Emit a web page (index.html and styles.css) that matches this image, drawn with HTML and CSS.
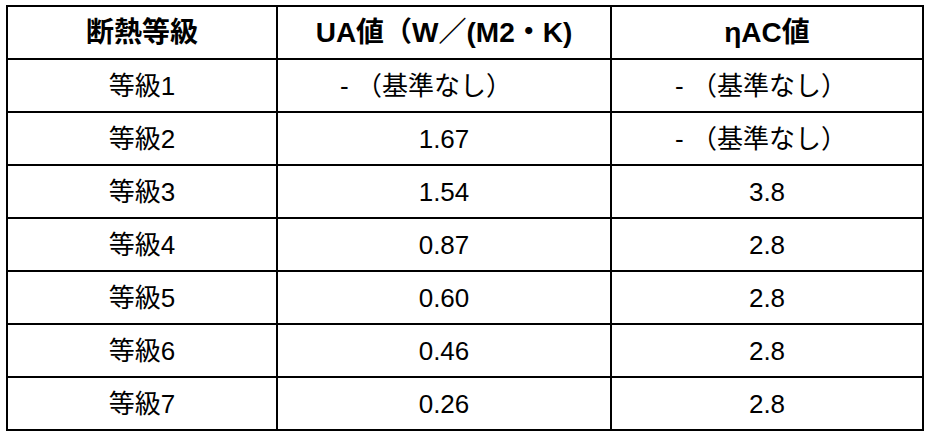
FILE: index.html
```html
<!DOCTYPE html>
<html lang="ja">
<head>
<meta charset="utf-8">
<link rel="stylesheet" href="styles.css">
</head>
<body>
<table class="grade-table">
  <colgroup>
    <col class="c1">
    <col class="c2">
    <col class="c3">
  </colgroup>
  <thead>
    <tr><th>断熱等級</th><th>UA値（W／(M2・K)</th><th>ηAC値</th></tr>
  </thead>
  <tbody>
    <tr><td>等級1</td><td class="none-ua">- （基準なし）</td><td class="none-ac">- （基準なし）</td></tr>
    <tr><td>等級2</td><td>1.67</td><td class="none-ac">- （基準なし）</td></tr>
    <tr><td>等級3</td><td>1.54</td><td>3.8</td></tr>
    <tr><td>等級4</td><td>0.87</td><td>2.8</td></tr>
    <tr><td>等級5</td><td>0.60</td><td>2.8</td></tr>
    <tr><td>等級6</td><td>0.46</td><td>2.8</td></tr>
    <tr><td>等級7</td><td>0.26</td><td>2.8</td></tr>
  </tbody>
</table>
</body>
</html>
```
FILE: styles.css
```css
html, body {
  margin: 0;
  padding: 0;
  background: #ffffff;
}
body {
  padding: 5px 0 0 6px;
  font-family: "Liberation Sans", "Noto Sans CJK JP", sans-serif;
  color: #000000;
}
.grade-table {
  border-collapse: collapse;
  width: 916px;
  table-layout: fixed;
}
.c1 { width: 270px; }
.c2 { width: 334px; }
.c3 { width: 312px; }
.grade-table th,
.grade-table td {
  border: 2px solid #000000;
  height: 51px;
  padding: 0;
  text-align: center;
  vertical-align: middle;
  line-height: 30px;
}
.grade-table th {
  font-weight: bold;
  font-size: 28px;
}
.grade-table td {
  font-weight: normal;
  font-size: 26px;
}
.grade-table td.none-ua {
  padding-right: 36px;
}
.grade-table td.none-ac {
  padding-right: 12px;
}
```
